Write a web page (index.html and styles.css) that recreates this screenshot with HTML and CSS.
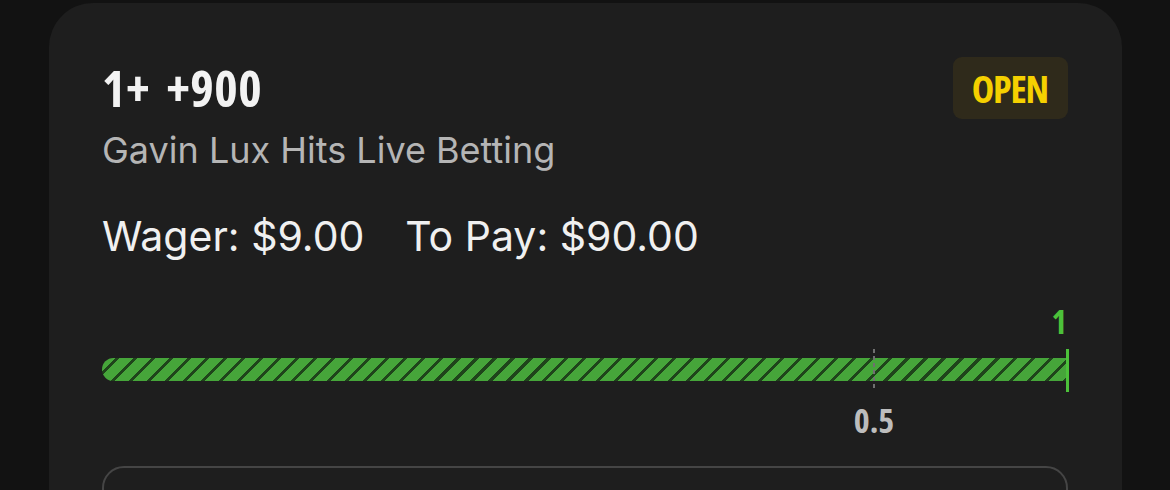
FILE: index.html
```html
<!DOCTYPE html>
<html lang="en">
<head>
  <meta charset="UTF-8">
  <title>Bet Card</title>
  <link rel="stylesheet" href="styles.css">
</head>
<body>
  <div class="card">
    <div class="head">
      <div class="title-block">
        <h1 class="odds"><span>1+</span> <span>+900</span></h1>
        <p class="market">Gavin Lux Hits Live Betting</p>
      </div>
      <span class="badge">OPEN</span>
    </div>

    <div class="amounts">
      <span>Wager: $9.00</span>
      <span>To Pay: $90.00</span>
    </div>

    <div class="progress">
      <div class="goal">1</div>
      <div class="track">
        <div class="fill"></div>
        <div class="end-tick"></div>
        <div class="marker" style="left: 80%;">
          <span class="marker-line"></span>
          <span class="marker-label">0.5</span>
        </div>
      </div>
    </div>

    <div class="next-box"></div>
  </div>
</body>
</html>
```
FILE: styles.css
```css
body {
  margin: 0;
  background-color: #121212;
  font-family: Inter, "Noto Sans", sans-serif;
  height: 490px;
  overflow: hidden;
}

.card {
  margin: 3px 0 0 49px;
  width: 1073px;
  height: 560px;
  box-sizing: border-box;
  background-color: #1e1e1e;
  border-radius: 44px;
  padding: 54px 54px 0 53px;
}

.head {
  display: flex;
  justify-content: space-between;
  align-items: flex-start;
}

.odds,
.badge,
.goal,
.marker-label {
  font-family: "Open Sans", sans-serif;
  font-stretch: 75%;
  font-weight: 700;
}

.odds {
  margin: 0;
  display: flex;
  gap: 16px;
  font-size: 50px;
  line-height: 62px;
  color: #f2f2f2;
  letter-spacing: 0.5px;
}

.market {
  margin: 11px 0 0 0;
  font-size: 36px;
  line-height: 40px;
  color: #b5b5b5;
}

.badge {
  background-color: #2f2a1b;
  color: #f5d000;
  border-radius: 9px;
  font-size: 38px;
  line-height: 62px;
  letter-spacing: -1.2px;
  padding: 0 20px 0 19px;
}

.amounts {
  margin-top: 43px;
  display: flex;
  gap: 41px;
  font-size: 41px;
  line-height: 46px;
  color: #f0f0f0;
}

.progress {
  margin-top: 46px;
}

.goal {
  text-align: right;
  font-size: 33px;
  line-height: 34px;
  color: #4cc13a;
  padding-right: 1px;
}

.track {
  position: relative;
  margin-top: 19px;
  height: 23px;
  margin-right: 1px;
}

.fill {
  height: 100%;
  border-radius: 12px 0 0 12px;
  background: repeating-linear-gradient(135deg, #46a53a 0, #46a53a 9.7px, #1f441b 9.7px, #1f441b 12.7px);
}

.end-tick {
  position: absolute;
  right: -2px;
  top: -9px;
  width: 3px;
  height: 43px;
  background-color: #4cc13a;
}

.marker {
  position: absolute;
  top: -9px;
  width: 0;
}

.marker-line {
  position: absolute;
  left: -1px;
  width: 2px;
  height: 42px;
  background: repeating-linear-gradient(180deg, #707070 0, #707070 4px, transparent 4px, transparent 7px);
}

.marker-label {
  position: absolute;
  top: 54px;
  left: -30px;
  width: 60px;
  text-align: center;
  font-size: 34px;
  line-height: 34px;
  color: #bdbdbd;
}

.next-box {
  margin-top: 85px;
  height: 100px;
  border: 2px solid #454545;
  border-radius: 22px;
}
```
